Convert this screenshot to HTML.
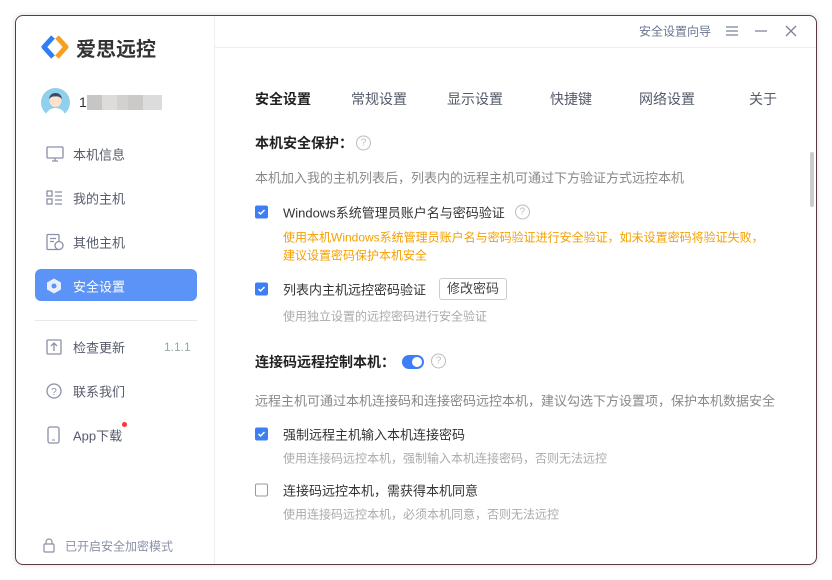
<!DOCTYPE html>
<html><head><meta charset="utf-8"><style>
*{margin:0;padding:0;box-sizing:border-box}
body{width:832px;height:580px;background:#fff;font-family:"Liberation Sans","Noto Sans CJK SC",sans-serif;position:relative;overflow:hidden}
.win{position:absolute;left:15px;top:15px;width:802px;height:550px;border:1px solid #5a3a48;border-radius:8px;background:#fff;box-shadow:0 0 6px rgba(0,0,0,.15);overflow:hidden}
.a{position:absolute;white-space:nowrap}
.side{position:absolute;left:0;top:0;width:199px;height:100%;border-right:1px solid #eee}
.mi{position:absolute;left:57px;font-size:13px;color:#555a6a;transform:translateY(-50%)}
.ic{position:absolute;left:30px;transform:translateY(-50%)}
.t{font-size:14px;color:#444;transform:translateY(-50%)}
.r{font-size:13px;color:#333;transform:translateY(-50%);display:flex;align-items:center}
.h{font-size:14px;font-weight:bold;color:#222;transform:translateY(-50%)}
.d{font-size:13px;color:#888;transform:translateY(-50%)}
.g{font-size:12px;color:#aaa;transform:translateY(-50%)}
.o{font-size:12px;color:#f5a000;transform:translateY(-50%)}
.cb{position:absolute;width:13px;height:13px;border-radius:2px;background:#3d7ef5;transform:translateY(-50%)}
.cb svg{display:block}
.cb.e{background:#fff;border:1px solid #999}
.q{position:absolute;width:15px;height:15px;border:1px solid #bbb;border-radius:50%;font-size:10px;color:#bbb;text-align:center;line-height:13px;transform:translateY(-50%)}
.qi{display:inline-block;width:15px;height:15px;border:1px solid #bbb;border-radius:50%;font-size:10px;color:#bbb;text-align:center;line-height:13px;margin-left:10px}
</style></head><body>
<div class="win">
<div class="side">
 <svg class="a" style="left:24px;top:18px" width="30" height="26" viewBox="0 0 30 26"><path d="M13 3 L4 13 L13 23" fill="none" stroke="#2f7ef5" stroke-width="5" stroke-linejoin="round"/><path d="M17 3 L26 13 L17 23" fill="none" stroke="#f7a020" stroke-width="5" stroke-linejoin="round"/></svg>
 <div class="a" style="left:60px;top:17px;font-size:20px;font-weight:bold;color:#333">爱思远控</div>
 <svg class="a" style="left:25px;top:72px" width="29" height="29" viewBox="0 0 29 29"><circle cx="14.5" cy="14.5" r="14.5" fill="#8fd0ec"/><circle cx="14.5" cy="13" r="6" fill="#fde3cc"/><path d="M8 11 Q9 5 14.5 5 Q20 5 21 11 Q18 8 14.5 8.5 Q11 8 8 11Z" fill="#3b4a6a"/><path d="M5 26 Q8 20 14.5 20 Q21 20 24 26 Q20 29 14.5 29 Q9 29 5 26Z" fill="#fff"/></svg>
 <div class="a" style="left:63px;top:78px;font-size:14px;color:#333">1</div>
 <div class="a" style="left:71px;top:79px;width:75px;height:15px;background:linear-gradient(90deg,#c8c6c4 0 20%,#dddcdb 20% 40%,#d2d1d0 40% 55%,#cbcac9 55% 75%,#dcdcdc 75%)"></div>
 <svg class="ic" style="top:138px" width="18" height="16" viewBox="0 0 18 16"><rect x="1" y="1" width="16" height="11" rx="1" fill="none" stroke="#8a90a6" stroke-width="1.3"/><path d="M6 15h6M9 12v3" stroke="#8a90a6" stroke-width="1.3"/></svg>
 <div class="mi" style="top:138px">本机信息</div>
 <svg class="ic" style="top:182px" width="18" height="16" viewBox="0 0 18 16"><rect x="1" y="1" width="5" height="5" fill="none" stroke="#8a90a6" stroke-width="1.3"/><rect x="1" y="9" width="5" height="5" fill="none" stroke="#8a90a6" stroke-width="1.3"/><path d="M9 2h7M9 6h7M9 10h7M9 14h7" stroke="#8a90a6" stroke-width="1.3"/></svg>
 <div class="mi" style="top:182px">我的主机</div>
 <svg class="ic" style="top:226px" width="18" height="17" viewBox="0 0 18 17"><rect x="1" y="1" width="12" height="15" rx="1" fill="none" stroke="#8a90a6" stroke-width="1.3"/><circle cx="13" cy="12" r="4" fill="#fff" stroke="#8a90a6" stroke-width="1.3"/><path d="M4 5h6M4 8h4" stroke="#8a90a6" stroke-width="1.3"/></svg>
 <div class="mi" style="top:226px">其他主机</div>
 <div class="a" style="left:19px;top:253px;width:162px;height:32px;background:#5b93f7;border-radius:6px"></div>
 <svg class="ic" style="top:270px" width="16" height="17" viewBox="0 0 16 17"><path d="M8 1 L15 5 L15 12 L8 16 L1 12 L1 5Z" fill="#e8eefc"/><circle cx="8" cy="8.5" r="2.5" fill="#5b93f7"/></svg>
 <div class="mi" style="top:270px;color:#fff">安全设置</div>
 <div class="a" style="left:19px;top:304px;width:162px;height:1px;background:#e8e8e8"></div>
 <svg class="ic" style="top:331px" width="16" height="16" viewBox="0 0 16 16"><rect x="1" y="1" width="14" height="14" rx="1" fill="none" stroke="#8a90a6" stroke-width="1.3"/><path d="M8 12V4M5 7l3-3 3 3" fill="none" stroke="#8a90a6" stroke-width="1.3"/></svg>
 <div class="mi" style="top:331px">检查更新</div>
 <div class="a" style="left:148px;top:331px;transform:translateY(-50%);font-size:12px;color:#9aa">1.1.1</div>
 <svg class="ic" style="top:375px" width="16" height="16" viewBox="0 0 16 16"><circle cx="8" cy="8" r="7" fill="none" stroke="#8a90a6" stroke-width="1.3"/><text x="8" y="12" font-size="10" text-anchor="middle" fill="#8a90a6" font-family="Liberation Sans">?</text></svg>
 <div class="mi" style="top:375px">联系我们</div>
 <svg class="ic" style="top:419px;left:31px" width="13" height="18" viewBox="0 0 13 18"><rect x="1" y="1" width="11" height="16" rx="2" fill="none" stroke="#8a90a6" stroke-width="1.3"/><path d="M5 14h3" stroke="#8a90a6"/></svg>
 <div class="mi" style="top:419px">App下载</div>
 <div class="a" style="left:106px;top:406px;width:5px;height:5px;border-radius:50%;background:#f33"></div>
 <svg class="a" style="left:27px;top:522px" width="12" height="15" viewBox="0 0 12 15"><rect x="1" y="6" width="10" height="8" rx="1" fill="none" stroke="#8a90a6" stroke-width="1.2"/><path d="M3 6V4a3 3 0 0 1 6 0v2" fill="none" stroke="#8a90a6" stroke-width="1.2"/></svg>
 <div class="a" style="left:49px;top:530px;transform:translateY(-50%);font-size:12px;color:#8a90a6">已开启安全加密模式</div>
</div>
<div class="a" style="left:199px;top:31px;width:602px;height:1px;background:#eee"></div>
<div class="a" style="left:623px;top:15px;transform:translateY(-50%);font-size:12px;color:#6b7590">安全设置向导</div>
<svg class="a" style="left:710px;top:9px" width="12" height="12"><path d="M0 2h12M0 6h12M0 10h12" stroke="#7a8298" stroke-width="1.2"/></svg>
<svg class="a" style="left:739px;top:9px" width="12" height="12"><path d="M0 6h12" stroke="#7a8298" stroke-width="1.3"/></svg>
<svg class="a" style="left:769px;top:9px" width="12" height="12"><path d="M1 1l10 10M11 1L1 11" stroke="#7a8298" stroke-width="1.3"/></svg>
<div class="a h" style="left:239px;top:83px;color:#222">安全设置</div>
<div class="a t" style="left:335px;top:83px;color:#555a6a">常规设置</div>
<div class="a t" style="left:431px;top:83px;color:#555a6a">显示设置</div>
<div class="a t" style="left:534px;top:83px;color:#555a6a">快捷键</div>
<div class="a t" style="left:623px;top:83px;color:#555a6a">网络设置</div>
<div class="a t" style="left:733px;top:83px;color:#555a6a">关于</div>
<div class="a" style="left:794px;top:136px;width:4px;height:55px;border-radius:2px;background:#ccc"></div>
<div class="a h" style="left:239px;top:127px">本机安全保护：</div>
<div class="q" style="left:340px;top:127px">?</div>
<div class="a d" style="left:239px;top:161px">本机加入我的主机列表后，列表内的远程主机可通过下方验证方式远控本机</div>
<div class="cb" style="left:239px;top:196px"><svg width="13" height="13"><path d="M3.5 6.5l2 2 4-4" fill="none" stroke="#fff" stroke-width="1.5"/></svg></div>
<div class="a r" style="left:267px;top:196px">Windows系统管理员账户名与密码验证<span class="qi">?</span></div>
<div class="a o" style="left:267px;top:221px">使用本机Windows系统管理员账户名与密码验证进行安全验证，如未设置密码将验证失败，</div>
<div class="a o" style="left:267px;top:239px">建议设置密码保护本机安全</div>
<div class="cb" style="left:239px;top:273px"><svg width="13" height="13"><path d="M3.5 6.5l2 2 4-4" fill="none" stroke="#fff" stroke-width="1.5"/></svg></div>
<div class="a r" style="left:267px;top:273px">列表内主机远控密码验证</div>
<div class="a" style="left:423px;top:262px;width:68px;height:22px;border:1px solid #ccc;border-radius:3px;font-size:13px;color:#444;text-align:center;line-height:20px">修改密码</div>
<div class="a g" style="left:267px;top:300px">使用独立设置的远控密码进行安全验证</div>
<div class="a h" style="left:239px;top:346px">连接码远程控制本机：</div>
<div class="a" style="left:386px;top:339px;width:22px;height:14px;border-radius:7px;background:#3d7ef5"><div style="position:absolute;right:2px;top:2px;width:10px;height:10px;border-radius:50%;background:#fff"></div></div>
<div class="q" style="left:415px;top:345px">?</div>
<div class="a d" style="left:239px;top:384px">远程主机可通过本机连接码和连接密码远控本机，建议勾选下方设置项，保护本机数据安全</div>
<div class="cb" style="left:239px;top:418px"><svg width="13" height="13"><path d="M3.5 6.5l2 2 4-4" fill="none" stroke="#fff" stroke-width="1.5"/></svg></div>
<div class="a r" style="left:267px;top:418px">强制远程主机输入本机连接密码</div>
<div class="a g" style="left:267px;top:442px">使用连接码远控本机，强制输入本机连接密码，否则无法远控</div>
<div class="cb e" style="left:239px;top:474px"></div>
<div class="a r" style="left:267px;top:474px">连接码远控本机，需获得本机同意</div>
<div class="a g" style="left:267px;top:498px">使用连接码远控本机，必须本机同意，否则无法远控</div>
</div>
</body></html>
